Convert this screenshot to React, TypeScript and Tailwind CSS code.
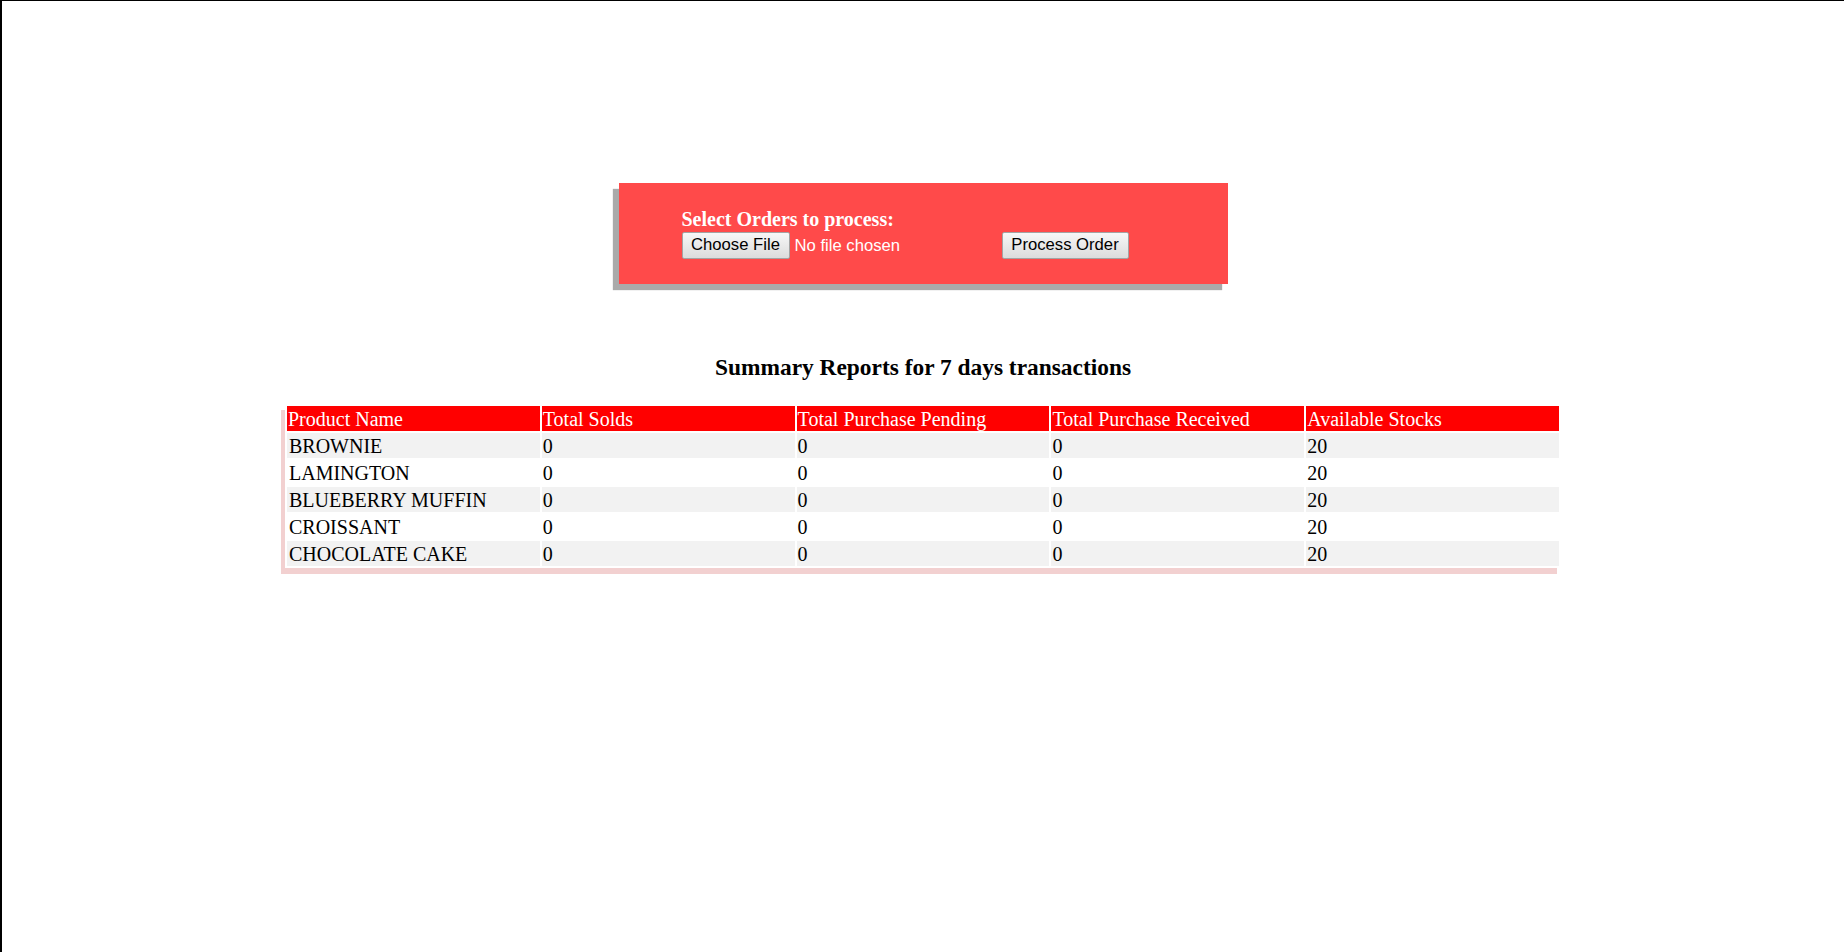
import React from 'react';

const rows = [
  { name: 'BROWNIE', sold: 0, pending: 0, received: 0, stock: 20 },
  { name: 'LAMINGTON', sold: 0, pending: 0, received: 0, stock: 20 },
  { name: 'BLUEBERRY MUFFIN', sold: 0, pending: 0, received: 0, stock: 20 },
  { name: 'CROISSANT', sold: 0, pending: 0, received: 0, stock: 20 },
  { name: 'CHOCOLATE CAKE', sold: 0, pending: 0, received: 0, stock: 20 },
];

const headers = ['Product Name', 'Total Solds', 'Total Purchase Pending', 'Total Purchase Received', 'Available Stocks'];

const btn =
  'h-[27px] border border-[#a3a3a3] rounded-[2px] bg-gradient-to-b from-[#f7f7f7] to-[#dcdcdc] text-black text-[16.67px] leading-none font-["Liberation_Sans",Arial,sans-serif]';

const cell = 'px-[1px] pt-[2px] pb-0';

export default function App() {
  return (
    <div className="min-h-[952px] bg-white border-t border-l-2 border-black font-['Liberation_Serif','Times_New_Roman',serif] text-black">
      <div className="flex flex-col items-center">
        {/* upload panel */}
        <div className="mt-[182px] w-[609px] h-[101px] bg-[#ff4a4a] shadow-[-6px_6px_1px_#aaaaaa] pl-[63px] pt-[25px]">
          <div className="text-white font-bold text-[20px] leading-[23px]">Select Orders to process:</div>
          <div className="mt-[1px] flex items-center">
            <div className="flex items-center w-[315px]">
              <button type="button" className={`${btn} w-[108px]`}>Choose File</button>
              <span className="ml-[5px] text-white text-[16.67px] font-['Liberation_Sans',Arial,sans-serif]">No file chosen</span>
            </div>
            <button type="button" className={`${btn} ml-[5px] w-[127px]`}>Process Order</button>
          </div>
        </div>

        <h3 className="mt-[70px] text-[23.4px] leading-[26px] font-bold">Summary Reports for 7 days transactions</h3>

        <table className="mt-[24px] w-[1276px] table-fixed border-separate border-spacing-[2px] bg-white shadow-[-4px_6px_0_#f2d0d0] text-[20px] leading-[23px]">
          <thead>
            <tr>
              {headers.map((h) => (
                <th key={h} className={`bg-[#ff0000] text-white font-normal text-left ${cell}`}>{h}</th>
              ))}
            </tr>
          </thead>
          <tbody>
            {rows.map((r, i) => (
              <tr key={r.name} className={i % 2 === 0 ? 'bg-[#f2f2f2]' : 'bg-white'}>
                <td className={`${cell} pl-[2px]`}>{r.name}</td>
                <td className={cell}>{r.sold}</td>
                <td className={cell}>{r.pending}</td>
                <td className={cell}>{r.received}</td>
                <td className={cell}>{r.stock}</td>
              </tr>
            ))}
          </tbody>
        </table>
      </div>
    </div>
  );
}
